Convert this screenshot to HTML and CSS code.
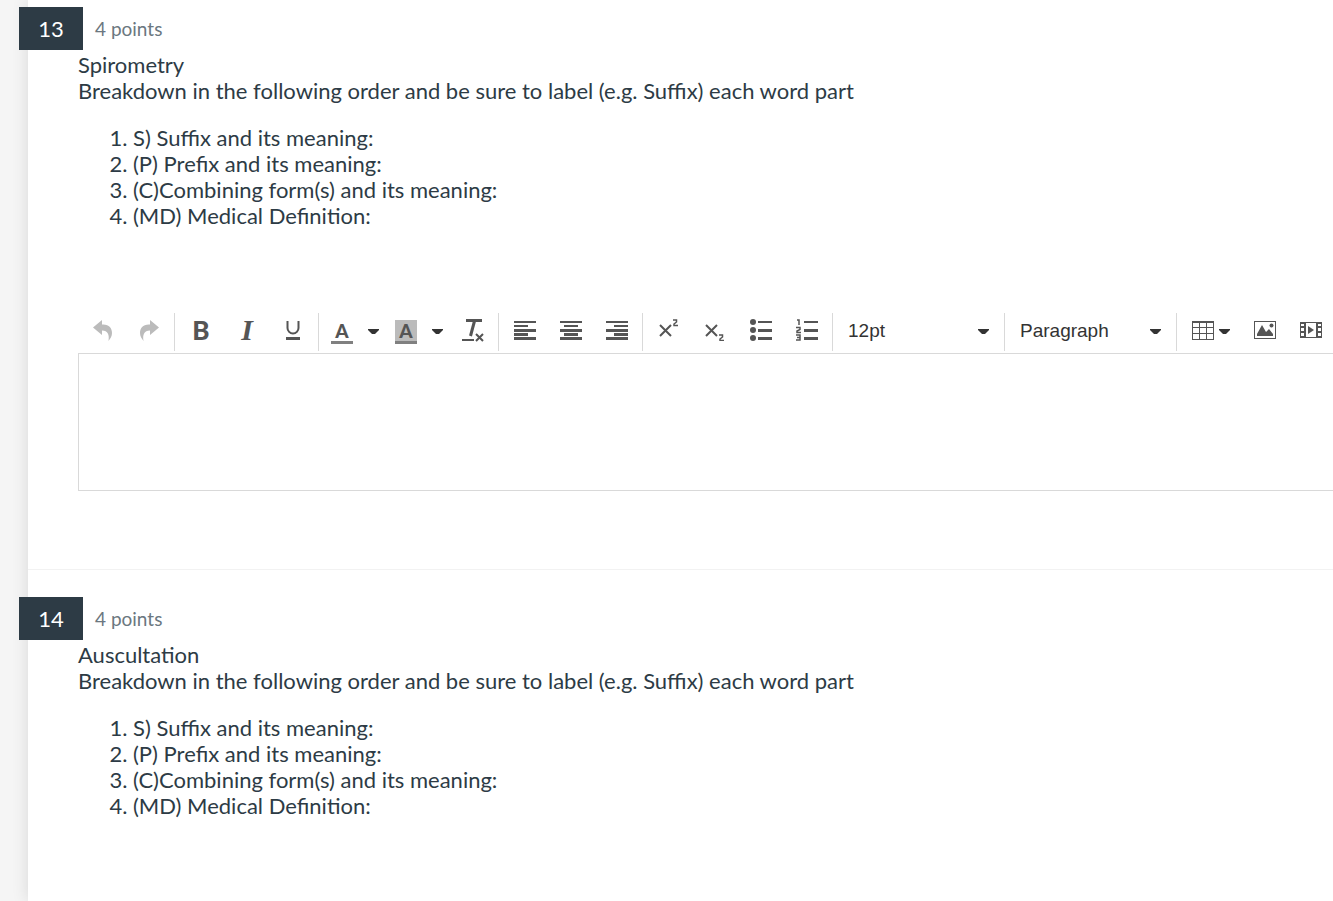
FILE: index.html
```
<!DOCTYPE html>
<html lang="en">
<head>
<meta charset="utf-8">
<title>Quiz</title>
<link rel="stylesheet" href="styles.css">
</head>
<body>

<main class="quiz">

<section class="question">
	<div class="header">
		<h2 class="number">13</h2>
		<span class="points">4 points</span>
	</div>
	<div class="text">
		<p>Spirometry<br>Breakdown in the following order and be sure to label (e.g. Suffix) each word part</p>
		<ol>
			<li>S) Suffix and its meaning:</li>
			<li>(P) Prefix and its meaning:</li>
			<li>(C)Combining form(s) and its meaning:</li>
			<li>(MD) Medical Definition:</li>
		</ol>
	</div>

	<div class="editor">
		<div class="toolbar">
			<div class="group">
				<button type="button" class="btn off" aria-label="Undo" disabled><svg width="22" height="22" viewBox="0 0 22 22"><path d="M1 8.500L10 1V5.500C17 5 20 9 20 14C20 17 18.500 19.500 16.500 22C17.500 16 16 11.500 10 11.500V16Z"/></svg></button>
				<button type="button" class="btn off" aria-label="Redo" disabled><svg width="22" height="22" viewBox="0 0 22 22"><path d="M21 8.500L12 1V5.500C5 5 2 9 2 14C2 17 3.500 19.500 5.500 22C4.500 16 6 11.500 12 11.500V16Z"/></svg></button>
			</div>
			<div class="group">
				<button type="button" class="btn" aria-label="Bold"><span class="bold">B</span></button>
				<button type="button" class="btn" aria-label="Italic"><span class="italic">I</span></button>
				<button type="button" class="btn" aria-label="Underline"><svg width="22" height="22" viewBox="0 0 22 22"><path class="line" d="M5.500 2V9a5.500 5.500 0 0 0 11 0V2"/><path d="M4 18h14v3H4z"/></svg></button>
			</div>
			<div class="group">
				<button type="button" class="btn color" aria-label="Text color"><span class="swatch">A</span><svg class="caret" width="11" height="6" viewBox="0 0 11 6"><path d="M0 0h11v1L7 5H4L0 1z"/></svg></button>
				<button type="button" class="btn color" aria-label="Background color"><span class="swatch filled">A</span><svg class="caret" width="11" height="6" viewBox="0 0 11 6"><path d="M0 0h11v1L7 5H4L0 1z"/></svg></button>
				<button type="button" class="btn" aria-label="Clear formatting"><svg width="22" height="24" viewBox="0 0 22 24"><path d="M4 1h16v3H4zM0 21h12v2H0z"/><path class="thick" d="M12.500 3L8.500 18"/><path class="line" d="M14 16l7 7M21 16l-7 7"/></svg></button>
			</div>
			<div class="group">
				<button type="button" class="btn" aria-label="Align left"><svg width="22" height="20" viewBox="0 0 22 20"><path d="M0 1h22v2H0zM0 5h14v2H0zM0 9h22v3H0zM0 13h14v3H0zM0 17h22v3H0z"/></svg></button>
				<button type="button" class="btn" aria-label="Align center"><svg width="22" height="20" viewBox="0 0 22 20"><path d="M0 1h22v2H0zM4 5h14v2H4zM0 9h22v3H0zM4 13h14v3H4zM0 17h22v3H0z"/></svg></button>
				<button type="button" class="btn" aria-label="Align right"><svg width="22" height="20" viewBox="0 0 22 20"><path d="M0 1h22v2H0zM8 5h14v2H8zM0 9h22v3H0zM8 13h14v3H8zM0 17h22v3H0z"/></svg></button>
			</div>
			<div class="group">
				<button type="button" class="btn" aria-label="Superscript"><svg width="22" height="22" viewBox="0 0 22 22"><path class="line" d="M2 6l11 11M13 6L2 17"/><path class="thin" d="M15 1h3.500v2L16 5v1.500h4"/></svg></button>
				<button type="button" class="btn" aria-label="Subscript"><svg width="22" height="22" viewBox="0 0 22 22"><path class="line" d="M2 6l11 11M13 6L2 17"/><path class="thin" d="M15 16h3.500v2L16 20v1.500h4"/></svg></button>
				<button type="button" class="btn" aria-label="Bullet list"><svg width="22" height="22" viewBox="0 0 22 22"><circle cx="3" cy="3" r="3"/><circle cx="3" cy="11" r="3"/><circle cx="3" cy="19" r="3"/><path d="M8 2h14v2H8zM8 10h14v3H8zM8 18h14v3H8z"/></svg></button>
				<button type="button" class="btn" aria-label="Numbered list"><svg width="22" height="22" viewBox="0 0 22 22"><path class="thin" d="M1 1h2v5M0 8.500h4v2L1 12v1.500h4M0 16h4v5H0M1 18.500h3"/><path d="M8 2h14v2H8zM8 10h14v3H8zM8 18h14v3H8z"/></svg></button>
			</div>
			<div class="group">
				<div class="drop">
					<select aria-label="Font size"><option>12pt</option></select>
					<svg class="caret" width="11" height="6" viewBox="0 0 11 6"><path d="M0 0h11v1L7 5H4L0 1z"/></svg>
				</div>
			</div>
			<div class="group">
				<div class="drop">
					<select aria-label="Block format"><option>Paragraph</option></select>
					<svg class="caret" width="11" height="6" viewBox="0 0 11 6"><path d="M0 0h11v1L7 5H4L0 1z"/></svg>
				</div>
			</div>
			<div class="group">
				<button type="button" class="btn table" aria-label="Table"><svg width="22" height="20" viewBox="0 0 22 20"><path fill-rule="evenodd" d="M0 1h22v19H0zM1 3v4h6V3zM8 3v4h6V3zM15 3v4h6V3zM1 8v5h6V8zM8 8v5h6V8zM15 8v5h6V8zM1 14v5h6v-5zM8 14v5h6v-5zM15 14v5h6v-5z"/></svg><svg class="caret" width="11" height="6" viewBox="0 0 11 6"><path d="M0 0h11v1L7 5H4L0 1z"/></svg></button>
				<button type="button" class="btn" aria-label="Image"><svg width="22" height="18" viewBox="0 0 22 18"><path fill-rule="evenodd" d="M0 0h22v18H0zM1 1v16h20V1z"/><path d="M3 15V13L8 4L12 11L15 8L19 13V15z"/><circle cx="17.500" cy="4.500" r="2"/></svg></button>
				<button type="button" class="btn" aria-label="Media"><svg width="22" height="18" viewBox="0 0 22 18"><path fill-rule="evenodd" d="M0 1h22v16H0zM6 2v14h10V2zM1 3v2h3V3zM1 7v3h3V7zM1 12v3h3v-3zM18 3v2h3V3zM18 7v3h3V7zM18 12v3h3v-3z"/><path d="M8 5l6 4l-6 4z"/></svg></button>
			</div>
		</div>
		<textarea class="answer" aria-label="Answer to question 13"></textarea>
	</div>
</section>

<section class="question">
	<div class="header">
		<h2 class="number">14</h2>
		<span class="points">4 points</span>
	</div>
	<div class="text">
		<p>Auscultation<br>Breakdown in the following order and be sure to label (e.g. Suffix) each word part</p>
		<ol>
			<li>S) Suffix and its meaning:</li>
			<li>(P) Prefix and its meaning:</li>
			<li>(C)Combining form(s) and its meaning:</li>
			<li>(MD) Medical Definition:</li>
		</ol>
	</div>
</section>

</main>

</body>
</html>
```

FILE: styles.css
```
body {
	margin: 0;
	background-color: #f5f5f5;
	color: #2d3b45;
	font-family: Lato, sans-serif;
	font-size: 22px;
	line-height: 26px;
	overflow-x: hidden;
}
.quiz {
	margin-left: 28px;
	min-height: 100vh;
	background-color: #fff;
	box-shadow: 0 0 16px rgba(0, 0, 0, 0.12);
}
.question {
	padding: 27px 0 78px 50px;
	border-bottom: 1px solid #f2f2f2;
}
.question:first-child {
	padding-top: 7px;
}
.question:last-child {
	border-bottom: 0;
}

/* question number sticks out over the left edge of the sheet */
.header {
	display: flex;
	align-items: center;
	margin-left: -59px;
}
.number {
	margin: 0;
	width: 64px;
	background-color: #2d3b45;
	color: #fff;
	font-size: 22px;
	font-weight: normal;
	line-height: 43px;
	text-align: center;
}
.points {
	margin-left: 12px;
	color: #6b7780;
	font-size: 19px;
}
.text {
	padding-top: 2px;
}
.text p {
	margin: 0;
}
.text ol {
	margin: 21px 0 0;
	padding-left: 55px;
}

.toolbar {
	display: flex;
	margin-top: 84px;
	padding-bottom: 2px;
}
.group {
	display: flex;
	flex: none;
	height: 38px;
	padding: 0 2px 0 3px;
	border-left: 1px solid #d9d9d9;
}
.group:first-child {
	padding-left: 2px;
	border-left: 0;
}
.btn {
	display: flex;
	align-items: center;
	justify-content: center;
	width: 46px;
	height: 34px;
	padding: 0;
	border: 0;
	background: none;
	color: #555;
}
.btn svg {
	fill: #555;
}
.btn .line,
.btn .thick,
.btn .thin {
	fill: none;
	stroke: #555;
	stroke-width: 2;
}
.btn .thick {
	stroke-width: 3;
}
.btn .thin {
	stroke-width: 1.5;
}
.btn.off svg {
	fill: #bbb;
}
.btn .caret,
.drop .caret {
	margin-top: 3px;
	fill: #333;
}
.bold {
	font: 900 26px Lato, sans-serif;
}
.italic {
	font: italic bold 30px "Liberation Serif", serif;
}
.btn.color {
	justify-content: flex-start;
	gap: 15px;
	width: 64px;
	padding-left: 9px;
}
.swatch {
	width: 22px;
	margin-top: 3px;
	border-bottom: 3px solid #808080;
	font: 900 19px/21px Lato, sans-serif;
	text-align: center;
}
.swatch.filled {
	background-color: #bbb;
}
.btn.table {
	gap: 5px;
	width: 62px;
}

.drop {
	display: grid;
	align-items: center;
	width: 166px;
	height: 34px;
}
.drop select,
.drop .caret {
	grid-area: 1 / 1;
}
.drop .caret {
	justify-self: end;
	margin-right: 13px;
	pointer-events: none;
}
.drop select {
	width: 100%;
	height: 34px;
	padding: 0 28px 0 12px;
	border: 0;
	background: none;
	color: #333;
	font: 19px "Liberation Sans", Arial, sans-serif;
	appearance: none;
}

.answer {
	display: block;
	box-sizing: border-box;
	width: 100%;
	height: 138px;
	padding: 12px;
	border: 1px solid #d9d9d9;
	border-right: 0;
	border-radius: 0;
	outline: 0;
	font: inherit;
	resize: none;
}
```
